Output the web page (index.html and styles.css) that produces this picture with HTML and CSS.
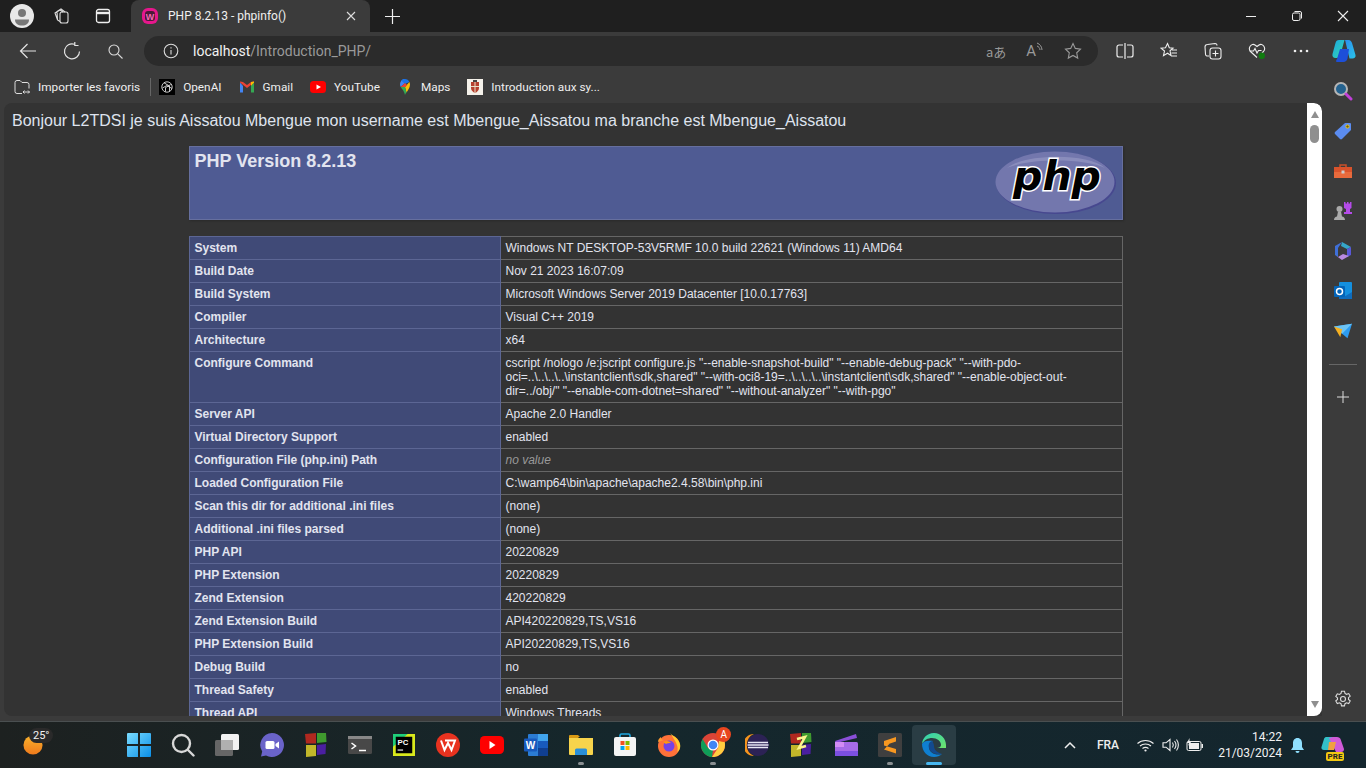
FILE: index.html
```html
<!DOCTYPE html>
<html lang="fr">
<head>
  <meta charset="UTF-8">
  <title>PHP 8.2.13 - phpinfo()</title>
  <link rel="stylesheet" href="styles.css">
</head>
<body>
  <!-- Barre d'onglets -->
  <div class="tabbar">
    <div class="tabbar-left">
      <div class="avatar">
        <svg width="24" height="24" viewBox="0 0 24 24"><circle cx="12" cy="12" r="12" fill="#e8e8e8"/><circle cx="12" cy="9" r="4" fill="#777"/><path d="M5 15.5h14c0 4-3 6-7 6s-7-2-7-6z" fill="#777"/></svg>
      </div>
      <svg class="tab-tool" width="18" height="18" viewBox="0 0 18 18" fill="none" stroke="#ddd" stroke-width="1.1"><rect x="8" y="5" width="8" height="11" rx="2"/><path d="M8 14.5L5.5 13 3 6l5-3 3 2M5.500 12.500L5 4.500 9 2l4 3"/></svg>
      <svg class="tab-tool" width="18" height="18" viewBox="0 0 18 18" fill="none" stroke="#eee" stroke-width="1.3"><rect x="2.500" y="2.500" width="13" height="13" rx="2"/><path d="M2.500 6h13" stroke-width="2.400"/></svg>
    </div>
    <div class="tab">
      <svg width="16" height="16" viewBox="0 0 16 16"><rect width="16" height="16" rx="6" fill="#e6178c"/><rect x="3" y="3" width="10" height="10" rx="3" fill="#4a1a38"/><text x="8" y="11.500" font-size="9" font-weight="700" text-anchor="middle" fill="#f36ab6" font-family="Liberation Sans">W</text></svg>
      <span class="tab-title">PHP 8.2.13 - phpinfo()</span>
      <svg width="10" height="10" viewBox="0 0 10 10" stroke="#ddd" stroke-width="1.1"><path d="M1 1l8 8M9 1l-8 8"/></svg>
    </div>
    <svg class="new-tab" width="15" height="15" viewBox="0 0 15 15" stroke="#eee" stroke-width="1.2"><path d="M7.500 0v15M0 7.500h15"/></svg>
    <div class="win-controls">
      <svg width="12" height="12" viewBox="0 0 12 12" stroke="#eee"><path d="M1 6.500h10"/></svg>
      <svg width="12" height="12" viewBox="0 0 12 12" fill="none" stroke="#eee"><rect x="1.500" y="3" width="7.500" height="7.500" rx="1.500"/><path d="M3.500 1.500H9A1.500 1.500 0 0 1 10.500 3v5.500"/></svg>
      <svg width="12" height="12" viewBox="0 0 12 12" stroke="#eee" stroke-width="1.1"><path d="M1 1l10 10M11 1L1 11"/></svg>
    </div>
  </div>

  <!-- Barre d'adresse -->
  <div class="toolbar">
    <svg class="nav-back" width="18" height="18" viewBox="0 0 18 18" fill="none" stroke="#e4e4e4" stroke-width="1.2"><path d="M17 9H1.500M8.500 2l-7 7 7 7"/></svg>
    <svg class="nav-reload" width="18" height="18" viewBox="0 0 18 18" fill="none" stroke="#e4e4e4" stroke-width="1.2"><path d="M11.500 2.300A7.500 7.500 0 1 0 16.500 9.500M11.800 0v3.500h3.700"/></svg>
    <svg class="nav-search" width="15" height="15" viewBox="0 0 15 15" fill="none" stroke="#dcdcdc" stroke-width="1.1"><circle cx="6" cy="6" r="5"/><path d="M9.800 9.800l4.700 4.700"/></svg>
    <div class="address">
      <svg width="16" height="16" viewBox="0 0 16 16" fill="none" stroke="#ddd" stroke-width="1.1"><circle cx="8" cy="8" r="6.800"/><path d="M8 7v4.500M8 4.300v1.200"/></svg>
      <span class="url"><b>localhost</b>/Introduction_PHP/</span>
      <div class="address-tools">
        <span class="translate">aあ</span>
        <span class="read">A<svg width="8" height="10" viewBox="0 0 8 10" fill="none" stroke="#999"><path d="M1 1c3 1 5 4 5 7M1 4c1.500.5 3 2 3 4"/></svg></span>
        <svg width="18" height="18" viewBox="0 0 18 18" fill="none" stroke="#999" stroke-width="1.1"><path d="M9 1.500l2.300 4.900 5.200.7-3.800 3.700 1 5.300L9 13.500l-4.700 2.600 1-5.300-3.800-3.700 5.200-.7z"/></svg>
      </div>
    </div>
    <div class="toolbar-tools">
      <svg width="18" height="18" viewBox="0 0 18 18" fill="none" stroke="#eee" stroke-width="1.2"><path d="M7 3H3a2 2 0 0 0-2 2v8a2 2 0 0 0 2 2h4M11 3h4a2 2 0 0 1 2 2v8a2 2 0 0 1-2 2h-4M9 1v16"/></svg>
      <svg width="18" height="18" viewBox="0 0 18 18" fill="none" stroke="#eee" stroke-width="1.1"><path d="M7.500 1.500l1.800 4.300 3.700.3-3 2.700 1 4.700-3.500-2.300-4 2.500 1-4.700L1 6.200l4.500-.4zM12 8h5M11.500 11H17M11 14h6"/></svg>
      <svg width="18" height="18" viewBox="0 0 18 18" fill="none" stroke="#eee" stroke-width="1.1"><path d="M5 14H4a2 2 0 0 1-2.500-2L1 5c0-1.500 1-2.500 2.500-2.500l7.500-1c1 0 2 1 2 2"/><rect x="6" y="6" width="11" height="11" rx="2.500"/><path d="M11.500 8.500v6M8.500 11.500h6"/></svg>
      <svg width="18" height="18" viewBox="0 0 18 18" fill="none" stroke="#eee" stroke-width="1.1"><path d="M9 15.500L2.500 9.500C-.5 6 3.500.5 7 3l2 1.500L11 3c3.500-2.500 7.500 3 4.500 6.500L14 11"/><path d="M1.500 9h4L7 6.500l2 4.500 1.500-2.500h3"/><circle cx="13.800" cy="13.800" r="3.200" fill="#107c10" stroke="none"/></svg>
      <svg width="18" height="18" viewBox="0 0 18 18" fill="#eee"><circle cx="3" cy="9" r="1.300"/><circle cx="9" cy="9" r="1.300"/><circle cx="15" cy="9" r="1.300"/></svg>
      <svg width="24" height="24" viewBox="0 0 24 24"><defs><linearGradient id="cop1" x1="0" y1="0" x2="1" y2="1"><stop offset="0" stop-color="#1aa7e8"/><stop offset="1" stop-color="#37d9a8"/></linearGradient><linearGradient id="cop2" x1="0" y1="0" x2="1" y2="1"><stop offset="0" stop-color="#2b8cf0"/><stop offset="1" stop-color="#2ac4e8"/></linearGradient></defs><path d="M7 1h5.500L8.500 15.500C8 17.500 6.500 19 4.500 19h-1C1 19 0 17 .5 15L3.500 4C4 2 5 1 7 1z" fill="url(#cop1)"/><path d="M12.500 1h4c2 0 3 1.500 3.500 3l3.500 12c.5 2-1 3.500-3 3.500h-3L14 5c-.5-2-.5-4-1.500-4z" fill="url(#cop2)"/><path d="M8 10h9l-1.500 9.500C15 21.500 13.500 23 11.500 23H5c-1.500 0-1-1.500 0-3z" fill="#1d4fd8"/></svg>
    </div>
  </div>

  <div class="lower">
    <div class="content-col">
      <!-- Favoris -->
      <div class="bookmarks">
        <div class="bm bm-import">
          <svg width="16" height="16" viewBox="0 0 16 16" fill="none" stroke="#ddd"><path d="M8 14.500H3a2 2 0 0 1-2-2v-9a2 2 0 0 1 2-2h3l2 2h5a2 2 0 0 1 2 2v4"/><path d="M9 13h6.500M10.500 11.500L9 13l1.500 1.500M14 11.500l1.500 1.500-1.500 1.500"/></svg>
          <span>Importer les favoris</span>
        </div>
        <div class="bm-sep"></div>
        <div class="bm">
          <svg width="16" height="16" viewBox="0 0 16 16"><rect width="16" height="16" fill="#000"/><g fill="none" stroke="#ddd" stroke-width=".9"><circle cx="8" cy="8" r="5.200"/><path d="M5 3.800L10.500 7v5.200M11.800 5.500L6.500 8.600v4M13 9.500L7.800 6.500 3.500 9"/></g></svg>
          <span>OpenAI</span>
        </div>
        <div class="bm">
          <svg width="16" height="16" viewBox="0 0 16 16"><path d="M1 3.500v10h3V7z" fill="#4285f4"/><path d="M12 7v6.500h3v-10z" fill="#34a853"/><path d="M1 3.500L8 9l7-5.500v-1L12 3 8 6 4 3 1 2.500z" fill="#ea4335"/><path d="M12 3l3-.5v1L12 7z" fill="#fbbc04"/></svg>
          <span>Gmail</span>
        </div>
        <div class="bm">
          <svg width="16" height="16" viewBox="0 0 16 16"><rect y="2" width="16" height="12" rx="3.500" fill="#f00"/><path d="M6.500 5.500L11 8l-4.500 2.500z" fill="#fff"/></svg>
          <span>YouTube</span>
        </div>
        <div class="bm">
          <svg width="16" height="16" viewBox="0 0 16 16"><path d="M8 0C5.500 0 3 2 3 5.500c0 1 .3 1.800.7 2.500L8 4z" fill="#4285f4"/><path d="M8 0C6.500 0 5 .6 4.200 1.500L8 5l4.400-2C11.500 1 10 0 8 0z" fill="#1a73e8"/><path d="M13 5.500c0-1-.2-1.800-.6-2.500L8 8l1.500 5.500C10.500 11.500 13 9 13 5.500z" fill="#fbbc04"/><path d="M3.700 8c1 2 3.500 3.500 4.300 8 .2-1 .7-1.800 1.500-2.500L8 8z" fill="#34a853"/><path d="M3.700 8L8 4l2 2-2 2z" fill="#ea4335"/></svg>
          <span>Maps</span>
        </div>
        <div class="bm">
          <svg width="16" height="16" viewBox="0 0 16 16"><rect width="16" height="16" fill="#f4f1ea"/><path d="M4 3h8v6c0 2.500-2 4-4 5-2-1-4-2.500-4-5z" fill="#b5402e"/><path d="M8 3v11M4 7.500h8" stroke="#e8dfc8"/><rect x="6" y="1" width="4" height="2" fill="#444"/></svg>
          <span>Introduction aux sy...</span>
        </div>
      </div>

      <!-- Page -->
      <div class="viewport">
        <div class="page">
          <p class="hello">Bonjour L2TDSI je suis Aissatou Mbengue mon username est Mbengue_Aissatou ma branche est Mbengue_Aissatou</p>
          <div class="php-head">
            <h1>PHP Version 8.2.13</h1>
            <svg class="php-logo" width="122" height="66" viewBox="0 0 122 66">
              <ellipse cx="61" cy="33" rx="60" ry="31" fill="#47488f"/>
              <ellipse cx="60" cy="32" rx="59.500" ry="30.500" fill="#7377ad"/>
              <path d="M12 18C28 4 92 2 110 18 90 8 34 8 12 18z" fill="#9a9dc6" opacity=".6"/>
              <text class="php-word" x="62" y="40" text-anchor="middle">php</text>
            </svg>
          </div>
          <table class="info">
            <tr><td class="e">System</td><td class="v">Windows NT DESKTOP-53V5RMF 10.0 build 22621 (Windows 11) AMD64</td></tr>
            <tr><td class="e">Build Date</td><td class="v">Nov 21 2023 16:07:09</td></tr>
            <tr><td class="e">Build System</td><td class="v">Microsoft Windows Server 2019 Datacenter [10.0.17763]</td></tr>
            <tr><td class="e">Compiler</td><td class="v">Visual C++ 2019</td></tr>
            <tr><td class="e">Architecture</td><td class="v">x64</td></tr>
            <tr><td class="e">Configure Command</td><td class="v">cscript /nologo /e:jscript configure.js "--enable-snapshot-build" "--enable-debug-pack" "--with-pdo-oci=..\..\..\..\instantclient\sdk,shared" "--with-oci8-19=..\..\..\..\instantclient\sdk,shared" "--enable-object-out-dir=../obj/" "--enable-com-dotnet=shared" "--without-analyzer" "--with-pgo"</td></tr>
            <tr><td class="e">Server API</td><td class="v">Apache 2.0 Handler</td></tr>
            <tr><td class="e">Virtual Directory Support</td><td class="v">enabled</td></tr>
            <tr><td class="e">Configuration File (php.ini) Path</td><td class="v"><i>no value</i></td></tr>
            <tr><td class="e">Loaded Configuration File</td><td class="v">C:\wamp64\bin\apache\apache2.4.58\bin\php.ini</td></tr>
            <tr><td class="e">Scan this dir for additional .ini files</td><td class="v">(none)</td></tr>
            <tr><td class="e">Additional .ini files parsed</td><td class="v">(none)</td></tr>
            <tr><td class="e">PHP API</td><td class="v">20220829</td></tr>
            <tr><td class="e">PHP Extension</td><td class="v">20220829</td></tr>
            <tr><td class="e">Zend Extension</td><td class="v">420220829</td></tr>
            <tr><td class="e">Zend Extension Build</td><td class="v">API420220829,TS,VS16</td></tr>
            <tr><td class="e">PHP Extension Build</td><td class="v">API20220829,TS,VS16</td></tr>
            <tr><td class="e">Debug Build</td><td class="v">no</td></tr>
            <tr><td class="e">Thread Safety</td><td class="v">enabled</td></tr>
            <tr><td class="e">Thread API</td><td class="v">Windows Threads</td></tr>
          </table>
        </div>
        <div class="scrollbar">
          <div class="scroll-top">
            <div class="arrow-up"></div>
            <div class="thumb"></div>
          </div>
          <div class="arrow-down"></div>
        </div>
      </div>
    </div>

    <!-- Barre laterale -->
    <div class="sidebar">
      <div class="side-item"><svg width="20" height="20" viewBox="0 0 20 20"><circle cx="8" cy="8" r="6" fill="#24628f" stroke="#b5b5b5" stroke-width="2"/><path d="M13 13l5 5" stroke="#c03fd8" stroke-width="3" stroke-linecap="round"/></svg></div>
      <div class="side-item"><svg width="20" height="20" viewBox="0 0 20 20"><path d="M12 2h5a1 1 0 0 1 1 1v6l-9 9a1.500 1.500 0 0 1-2 0l-5-5a1.500 1.500 0 0 1 0-2z" fill="#5b8cf0"/><circle cx="14.500" cy="5.500" r="1.600" fill="#6b5a10" stroke="#f2c811"/></svg></div>
      <div class="side-item"><svg width="20" height="20" viewBox="0 0 20 20"><path d="M7 6V4h6v2" fill="none" stroke="#c9502a" stroke-width="1.500"/><rect x="1" y="6" width="18" height="5" fill="#d9532c"/><rect x="1" y="11" width="18" height="6" fill="#e86a3c"/><rect x="8.500" y="9.500" width="3" height="3" fill="#ccc"/></svg></div>
      <div class="side-item"><svg width="20" height="20" viewBox="0 0 20 20"><circle cx="6.500" cy="8" r="3" fill="#aaa"/><path d="M5 10.500h3l1 5H4zM1 19c0-2 1.500-3.500 3-3.500h5c1.500 0 3 1.500 3 3.500z" fill="#aaa"/><path d="M11 1h1.500v1.500H14V1h1.500v1.500H17V1h1.500v6L17 8v3h2v2h-8v-2h2V8l-2-1z" fill="#b44be8"/></svg></div>
      <div class="side-item"><svg width="20" height="20" viewBox="0 0 20 20"><path d="M9 1L2 5v9l3 2V7z" fill="#3f6fd8"/><path d="M9 1l9 5-4 2-6-3z" fill="#35a6c9"/><path d="M18 6v8l-4 2V8z" fill="#5a58d8"/><path d="M2 14l7 5 7-4-6-2-5 3z" fill="#b98ae0"/></svg></div>
      <div class="side-item"><svg width="20" height="20" viewBox="0 0 20 20"><rect x="6" y="1" width="13" height="17" rx="1" fill="#1490df"/><path d="M6 12l6.500 3 6.500-4v7H6z" fill="#0f6cbd"/><rect x="1" y="5" width="11" height="11" rx="1" fill="#0364b8"/><circle cx="6.500" cy="10.500" r="3" fill="none" stroke="#fff" stroke-width="1.500"/></svg></div>
      <div class="side-item"><svg width="20" height="18" viewBox="0 0 22 20"><path d="M1 5l20-3-5 16-6-5z" fill="#2d9cf0"/><path d="M1 5l9 8L21 2z" fill="#6cc4f5"/><path d="M1 5l9 3-2 9z" fill="#f5b021"/></svg></div>
      <div class="side-line"></div>
      <div class="side-add"><svg width="14" height="14" viewBox="0 0 14 14" stroke="#ddd"><path d="M7 1v12M1 7h12"/></svg></div>
      <div class="side-gear"><svg width="18" height="18" viewBox="0 0 18 18" fill="none" stroke="#ddd" stroke-width="1.1"><path d="M7.500 1.200h3l.5 2.200 1.500.9 2.200-.7 1.500 2.600-1.700 1.500v1.700l1.700 1.500-1.500 2.600-2.200-.7-1.500.9-.5 2.200h-3l-.5-2.200-1.500-.9-2.200.7-1.500-2.600 1.700-1.500V7.900L1.800 6.400l1.500-2.600 2.200.7L7 3.400z"/><circle cx="9" cy="9" r="2.500"/></svg></div>
    </div>
  </div>

  <!-- Barre des taches -->
  <div class="taskbar">
    <div class="weather">
      <svg width="20" height="20" viewBox="0 0 22 22"><defs><linearGradient id="sun" x1="0" y1="0" x2="0" y2="1"><stop offset="0" stop-color="#f9b22c"/><stop offset="1" stop-color="#ee7a1c"/></linearGradient></defs><circle cx="11" cy="11" r="10.500" fill="url(#sun)"/></svg>
      <span class="temp">25°</span>
    </div>
    <div class="task-apps">
      <div class="app"><svg width="24" height="24" viewBox="0 0 24 24"><defs><linearGradient id="win" x1="0" y1="0" x2="1" y2="1"><stop offset="0" stop-color="#7adcff"/><stop offset="1" stop-color="#0a8fe8"/></linearGradient></defs><path d="M0 1a1 1 0 0 1 1-1h10v11H0zM13 0h10a1 1 0 0 1 1 1v10H13zM0 13h11v11H1a1 1 0 0 1-1-1zM13 13h11v10a1 1 0 0 1-1 1H13z" fill="url(#win)"/></svg></div>
      <div class="app"><svg width="24" height="24" viewBox="0 0 24 24" fill="none" stroke="#d8d8d8" stroke-width="2.400"><circle cx="10.500" cy="10.500" r="8.500"/><path d="M17 17l5.500 5.500" stroke-linecap="round"/></svg></div>
      <div class="app"><svg width="24" height="24" viewBox="0 0 24 24"><rect x="6" y="1" width="18" height="16" rx="1.500" fill="#f2f2f2"/><rect y="7" width="18" height="16" rx="1.500" fill="#666"/><rect x="6" y="7" width="12" height="10" fill="#b0b0b0"/></svg></div>
      <div class="app"><svg width="24" height="24" viewBox="0 0 24 24"><path d="M12 0a12 12 0 1 1-6 22.400L1 23.500l1.200-5A12 12 0 0 1 12 0z" fill="#6a63c9"/><rect x="5.500" y="8" width="9" height="8" rx="1.500" fill="#fff"/><path d="M15.500 11L19 8.500v7L15.500 13z" fill="#fff"/></svg></div>
      <div class="app"><svg width="24" height="24" viewBox="0 0 24 24"><path d="M1 1l11-1v10.500H2z" fill="#b0281f"/><path d="M13 0l9-.5.5 9.500-9.500 1z" fill="#3f9a2e"/><path d="M2 12h10v11L2 24z" fill="#c2b72a"/><path d="M13 12l9-1-.5 10-8.500 1z" fill="#4b1fa0"/></svg></div>
      <div class="app"><svg width="24" height="20" viewBox="0 0 24 20"><rect width="24" height="18" y="1" rx="1.500" fill="#484848"/><rect width="24" height="3" y="1" fill="#888"/><path d="M3.500 8l4 3-4 3" fill="none" stroke="#fff" stroke-width="1.500"/><path d="M11 15.500h7" stroke="#fff" stroke-width="1.500"/></svg></div>
      <div class="app"><svg width="22" height="22" viewBox="0 0 24 24"><rect width="24" height="24" fill="#d8e81c"/><path d="M0 0h16L0 14z" fill="#1fcf7a"/><rect x="3" y="3" width="18" height="18" fill="#000"/><text x="5" y="12" font-size="8.500" font-weight="700" fill="#fff" font-family="Liberation Sans">PC</text><path d="M5 17.500h6" stroke="#fff" stroke-width="1.200"/></svg></div>
      <div class="app"><svg width="24" height="24" viewBox="0 0 24 24"><circle cx="12" cy="12" r="12" fill="#e8321f"/><path d="M5 7.500L8.500 17 12 10l3.500 7L19 7.500h-4M9 7.500h6" fill="none" stroke="#fff" stroke-width="2"/></svg></div>
      <div class="app"><svg width="24" height="18" viewBox="0 0 24 18"><rect width="24" height="18" rx="4.500" fill="#f00"/><path d="M9.500 5l6 4-6 4z" fill="#fff"/></svg></div>
      <div class="app"><svg width="24" height="24" viewBox="0 0 24 24"><rect x="4" y="1" width="20" height="22" rx="1" fill="#2b7cd3"/><rect x="14" y="1" width="10" height="7" fill="#41a5ee"/><rect x="14" y="15" width="10" height="8" fill="#103f91"/><rect x="14" y="8" width="10" height="7" fill="#185abd"/><rect y="5.500" width="13" height="13" rx="1" fill="#185abd"/><text x="6.500" y="15.500" font-size="10" font-weight="700" text-anchor="middle" fill="#fff" font-family="Liberation Sans">W</text></svg></div>
      <div class="app"><svg width="24" height="22" viewBox="0 0 24 22"><path d="M0 2a1 1 0 0 1 1-1h8l2 2h-1L8 5H0z" fill="#d99a14"/><path d="M0 4h24v16a1 1 0 0 1-1 1H1a1 1 0 0 1-1-1z" fill="#f7d44c"/><path d="M6 21v-5a1.500 1.500 0 0 1 1.500-1.500h9A1.500 1.500 0 0 1 18 16v5z" fill="#2a8fd8"/></svg><span class="dot"></span></div>
      <div class="app"><svg width="24" height="24" viewBox="0 0 24 24"><path d="M7 5V2.500A1.500 1.500 0 0 1 8.500 1h7A1.500 1.500 0 0 1 17 2.500V5" fill="none" stroke="#1fa8e0" stroke-width="1.600"/><path d="M1 6a2 2 0 0 1 2-2h18a2 2 0 0 1 2 2v15a2 2 0 0 1-2 2H3a2 2 0 0 1-2-2z" fill="#f4f4f4"/><rect x="7.500" y="8" width="4" height="4" fill="#f25022"/><rect x="12.500" y="8" width="4" height="4" fill="#7fba00"/><rect x="7.500" y="13" width="4" height="4" fill="#00a4ef"/><rect x="12.500" y="13" width="4" height="4" fill="#ffb900"/></svg></div>
      <div class="app"><svg width="24" height="24" viewBox="0 0 24 24"><circle cx="12" cy="13" r="11" fill="#ff7139"/><path d="M13 0c2 3 8 4 10 11 1 4-1 7-3 8 2-4 0-9-7-19z" fill="#ffcb2e"/><path d="M1 9c0-3 2-4 3-5 0 2 1 3 3 3z" fill="#ff9a2e"/><circle cx="12" cy="13" r="5.500" fill="#7542e5"/><path d="M6 9c3-2 7-1 8 1-2 0-4 0-5 1z" fill="#ff980e"/></svg></div>
      <div class="app"><svg width="24" height="24" viewBox="0 0 24 24"><circle cx="12" cy="12" r="12" fill="#db4437"/><path d="M12 24A12 12 0 0 1 1.600 6L7 15l5 2-1 7z" fill="#0f9d58"/><path d="M24 12a12 12 0 0 1-13 12l6-9 1-7h5.500c.3 1.300.5 2.600.5 4z" fill="#ffcd40"/><circle cx="12" cy="12" r="5.500" fill="#fff"/><circle cx="12" cy="12" r="4.300" fill="#4285f4"/></svg><span class="badge">A</span><span class="dot"></span></div>
      <div class="app"><svg width="24" height="24" viewBox="0 0 24 24"><circle cx="13" cy="12" r="11" fill="#2c2255"/><path d="M9 1a11 11 0 0 0 0 22A12 12 0 0 1 9 1z" fill="#f7941e"/><path d="M3 9.500h20M2.500 12h21M3 14.500h20" stroke="#e8e6f5" stroke-width="1.300"/></svg></div>
      <div class="app"><svg width="24" height="24" viewBox="0 0 24 24"><path d="M1 1l11-1v10.500H2z" fill="#b0281f"/><path d="M13 0l9-.5.5 9.500-9.500 1z" fill="#3f9a2e"/><path d="M2 12h10v11L2 24z" fill="#c2b72a"/><path d="M13 12l9-1-.5 10-8.500 1z" fill="#4b1fa0"/><path d="M8 6l8-2-6 11 7-2" fill="none" stroke="#fbf58c" stroke-width="2.600"/></svg></div>
      <div class="app"><svg width="24" height="24" viewBox="0 0 24 24"><path d="M1 8l21-7 1 4L2 10z" fill="#8a4fd8"/><rect x="1" y="9" width="23" height="14" rx="1.500" fill="#a66be8"/><path d="M1 9h9v5H1z" fill="#d28cf5"/><path d="M1 18h23v5H1z" fill="#7c4fe0"/></svg></div>
      <div class="app"><svg width="24" height="24" viewBox="0 0 24 24"><rect width="24" height="24" rx="1.500" fill="#3f3f3f"/><path d="M18 4L6 8v4.500l12 3.500v4.500l-12-4M6 12.500l12-4V4" fill="#f89820"/></svg><span class="dot"></span></div>
      <div class="app app-active"><svg width="24" height="24" viewBox="0 0 24 24"><defs><linearGradient id="edge" x1="0" y1="0" x2="1" y2="1"><stop offset="0" stop-color="#2dd0b6"/><stop offset="1" stop-color="#6fe36b"/></linearGradient></defs><path d="M12 0C5 0 .5 5 0 11c2-4 6-6 10-6 5 0 9 3 9 7 0 2-2 3-4 3h9c.3-1 0-2 0-3 0-6-5-12-12-12z" fill="url(#edge)"/><path d="M0 11c0 7 5 13 12 13 3 0 6-1 8-3-6 2-13-1-13-7 0-3 2-5 4-6C6 7 1 8 0 11z" fill="#0f7fd0"/><path d="M10 8c-3 1-4 4-3 7 1 4 6 7 13 6-3-1-8-3-8-8 0-2-1-4-2-5z" fill="#134a8e"/></svg><span class="dot dot-on"></span></div>
    </div>
    <div class="tray">
      <svg width="12" height="8" viewBox="0 0 12 8" fill="none" stroke="#eee" stroke-width="1.500"><path d="M1 7l5-5 5 5"/></svg>
      <span class="lang">FRA</span>
      <svg class="tray-wifi" width="17" height="13" viewBox="0 0 17 13" fill="none" stroke="#eee" stroke-width="1.1"><path d="M.5 4.500c4.500-4 11.500-4 16 0M3 7c3-2.600 8-2.600 11 0M5.500 9.500c1.800-1.300 4.200-1.300 6 0"/><circle cx="8.500" cy="11.500" r="1.100" fill="#eee" stroke="none"/></svg>
      <svg class="tray-sound" width="17" height="14" viewBox="0 0 17 14" fill="none" stroke="#eee" stroke-width="1.1"><path d="M1 4.800h3l4-3.300v11L4 9.200H1zM10.500 4.500c1 1.500 1 3.500 0 5M12.500 3c1.800 2.400 1.800 5.600 0 8M14.500 1.500c2.500 3.200 2.500 7.800 0 11"/></svg>
      <svg class="tray-batt" width="17" height="14" viewBox="0 0 17 14"><rect x="1" y="3.500" width="14" height="9" rx="1.500" fill="none" stroke="#eee"/><rect x="3" y="5" width="10" height="6" fill="#eee"/><rect x="15.500" y="6" width="1.500" height="4" fill="#eee"/><path d="M3.500 0L1 5h2L2 8l3.500-4.500h-2z" fill="#eee"/></svg>
      <div class="clock"><span>14:22</span><span>21/03/2024</span></div>
      <svg class="tray-bell" width="15" height="16" viewBox="0 0 15 16"><path d="M7.500 1C4.500 1 3 3.500 3 6v4l-2 3h13l-2-3V6c0-2.500-1.500-5-4.500-5z" fill="#8fe0ff"/><path d="M5.500 14a2 2 0 0 0 4 0z" fill="#8fe0ff"/></svg>
      <div class="tray-copilot">
        <svg width="23" height="18" viewBox="0 0 23 18"><path d="M5 1h7L8 14H3c-2 0-3-1.500-2.500-3L3 3c.3-1 1-2 2-2z" fill="#33c0c8"/><path d="M8 2l4-1h4c2 0 3 1 3.500 2L23 13c0 2-1 3-3 3h-5z" fill="#d05ad8"/><path d="M8 6h7l-2 8H7z" fill="#f0a040"/></svg>
        <span class="pre">PRE</span>
      </div>
    </div>
  </div>
</body>
</html>
```

FILE: styles.css
```css
* {
  box-sizing: border-box;
}

html, body {
  height: 100%;
}

body {
  margin: 0;
  display: flex;
  flex-direction: column;
  overflow: hidden;
  background: #3b3b3b;
  font-family: 'Roboto', 'Liberation Sans', sans-serif;
  color: #eee;
}

svg {
  display: block;
  flex: none;
}

/* Barre d'onglets */
.tabbar {
  height: 32px;
  flex: none;
  display: flex;
  align-items: center;
  background: #1f1f1f;
}

.tabbar-left {
  width: 131px;
  padding-left: 10px;
  display: flex;
  align-items: center;
}

.avatar {
  margin-right: 18px;
}

.tab-tool {
  margin-right: 24px;
}

.tab {
  width: 239px;
  height: 32px;
  padding: 0 14px 0 11px;
  display: flex;
  align-items: center;
  background: #3b3b3b;
  border-radius: 8px 8px 0 0;
  font-size: 12px;
}

.tab-title {
  flex: 1;
  margin-left: 10px;
  color: #f0f0f0;
}

.new-tab {
  margin-left: 15px;
}

.win-controls {
  margin-left: auto;
  padding-right: 17px;
  display: flex;
  gap: 34px;
}

/* Barre d'adresse */
.toolbar {
  height: 38px;
  flex: none;
  display: flex;
  align-items: center;
}

.nav-back {
  margin-left: 19px;
}

.nav-reload {
  margin-left: 26px;
}

.nav-search {
  margin-left: 27px;
}

.address {
  width: 954px;
  height: 30px;
  margin-left: 21px;
  padding: 0 16px 0 19px;
  display: flex;
  align-items: center;
  background: #2b2b2b;
  border-radius: 15px;
}

.url {
  margin-left: 14px;
  font-size: 14px;
  color: #9a9a9a;
}

.url b {
  font-weight: 400;
  color: #f2f2f2;
}

.address-tools {
  margin-left: auto;
  display: flex;
  align-items: center;
  gap: 20px;
  color: #999;
}

.translate {
  font-family: 'Noto Sans CJK JP', 'Roboto', sans-serif;
  font-size: 13px;
}

.read {
  display: flex;
  font-size: 15px;
}

.toolbar-tools {
  margin-left: 18px;
  display: flex;
  align-items: center;
  gap: 26px;
}

.toolbar-tools svg:last-child {
  margin-left: -4px;
}

/* Favoris + page */
.lower {
  flex: 1;
  min-height: 0;
  display: flex;
}

.content-col {
  width: 1322px;
  display: flex;
  flex-direction: column;
  padding-bottom: 5px;
}

.bookmarks {
  height: 33px;
  flex: none;
  padding-left: 14px;
  display: flex;
  align-items: center;
  font-size: 11.8px;
  color: #eee;
}

.bm {
  margin-right: 17px;
  display: flex;
  align-items: center;
  gap: 8px;
}

.bm-import {
  margin-right: 10px;
}

.bm-sep {
  width: 1px;
  height: 18px;
  margin-right: 8px;
  background: #666;
}

.viewport {
  flex: 1;
  min-height: 0;
  margin-left: 4px;
  display: flex;
  border-radius: 8px 8px 0 8px;
  overflow: hidden;
  background: #333;
}

.page {
  flex: 1;
  min-width: 0;
  overflow: hidden;
  padding: 9px 8px 0;
  font-family: 'Liberation Sans', Arial, sans-serif;
}

.hello {
  margin: 0 0 16px;
  font-size: 16px;
  line-height: 18px;
  color: #dfe3ee;
}

.php-head {
  width: 934px;
  height: 74px;
  margin: 0 auto 16px;
  padding: 4px 5px 0 5px;
  display: flex;
  justify-content: space-between;
  background: #4f5b93;
  border: 1px solid #666f9e;
  box-shadow: 1px 1px 2px rgba(0,0,0,0.2);
}

.php-head h1 {
  margin: 0;
  font-size: 18px;
  line-height: 20px;
  color: #e2e4ef;
}

.php-logo {
  margin-top: -1px;
}

.php-word {
  font-family: 'DejaVu Sans', sans-serif;
  font-size: 41px;
  font-weight: 700;
  font-style: italic;
  fill: #000;
  stroke: #fff;
  stroke-width: 3px;
  paint-order: stroke;
}

.info {
  width: 934px;
  margin: 0 auto;
  border-collapse: collapse;
  table-layout: fixed;
  font-size: 12px;
  line-height: 14px;
  color: #e2e4ef;
}

.info td {
  padding: 4px 5px;
  vertical-align: top;
  border: 1px solid #666;
}

.e {
  width: 311px;
  font-weight: 700;
  background: #404a77;
  border-color: #5c6694 !important;
}

.v {
  padding-right: 50px !important;
  background: #333;
}

.v i {
  color: #999;
}

/* Ascenseur */
.scrollbar {
  width: 15px;
  flex: none;
  padding: 8px 3px;
  display: flex;
  flex-direction: column;
  justify-content: space-between;
  background: #fff;
  border-radius: 0 8px 8px 0;
}

.scroll-top {
  display: flex;
  flex-direction: column;
  gap: 7px;
}

.arrow-up, .arrow-down {
  width: 0;
  height: 0;
  margin: 0 auto;
  border-left: 4.5px solid transparent;
  border-right: 4.5px solid transparent;
}

.arrow-up {
  border-bottom: 7px solid #8f8f8f;
}

.arrow-down {
  border-top: 7px solid #8f8f8f;
}

.thumb {
  height: 18px;
  background: #8f8f8f;
  border-radius: 5px;
}

/* Barre laterale */
.sidebar {
  width: 44px;
  flex: none;
  display: flex;
  flex-direction: column;
  align-items: center;
  padding: 1px 2px 0 0;
}

.side-item {
  height: 40px;
  display: flex;
  align-items: center;
  justify-content: center;
}

.side-line {
  width: 28px;
  height: 1px;
  margin-top: 13px;
  background: #666;
}

.side-add {
  margin-top: 25px;
}

.side-gear {
  margin-top: auto;
  margin-bottom: 13px;
}

/* Barre des taches */
.taskbar {
  height: 47px;
  flex: none;
  display: flex;
  align-items: center;
  background: linear-gradient(90deg, #1d2120, #15272c 45%, #14262e);
  border-top: 1px solid #4a4f50;
}

.weather {
  width: 117px;
  padding-left: 23px;
  position: relative;
}

.temp {
  position: absolute;
  left: 29px;
  top: -7px;
  padding: 1px 4px;
  background: #2a2a2a;
  border-radius: 9px;
  font-size: 11px;
  color: #f2f2f2;
}

.task-apps {
  display: flex;
}

.app {
  width: 44.17px;
  height: 40px;
  display: flex;
  align-items: center;
  justify-content: center;
  position: relative;
  border-radius: 4px;
}

.app-active {
  background: #2a3d44;
}

.dot {
  position: absolute;
  left: 50%;
  bottom: 0;
  width: 6px;
  height: 3px;
  margin-left: -3px;
  background: #8a8f92;
  border-radius: 2px;
}

.dot-on {
  width: 16px;
  margin-left: -8px;
  background: #47b7f0;
}

.badge {
  position: absolute;
  top: 2px;
  right: 4px;
  width: 15px;
  height: 15px;
  background: #e8461f;
  border-radius: 50%;
  font-size: 10px;
  line-height: 15px;
  text-align: center;
  color: #fff;
}

/* Zone de notification */
.tray {
  margin-left: auto;
  padding-right: 22px;
  display: flex;
  align-items: center;
}

.lang {
  margin: 0 18px 0 21px;
  font-size: 12px;
  font-weight: 500;
}

.tray-sound {
  margin-left: 8px;
}

.tray-batt {
  margin-left: 7px;
}

.clock {
  width: 79px;
  display: flex;
  flex-direction: column;
  align-items: flex-end;
  gap: 1px;
  font-size: 12px;
  line-height: 15px;
  color: #f2f2f2;
}

.tray-bell {
  margin-left: 8px;
}

.tray-copilot {
  margin-left: 16px;
  position: relative;
}

.pre {
  position: absolute;
  left: 5px;
  top: 16px;
  width: 18px;
  height: 9px;
  background: #f2c811;
  border-radius: 2px;
  font-size: 8px;
  font-weight: 700;
  line-height: 9px;
  text-align: center;
  color: #222;
}
```
